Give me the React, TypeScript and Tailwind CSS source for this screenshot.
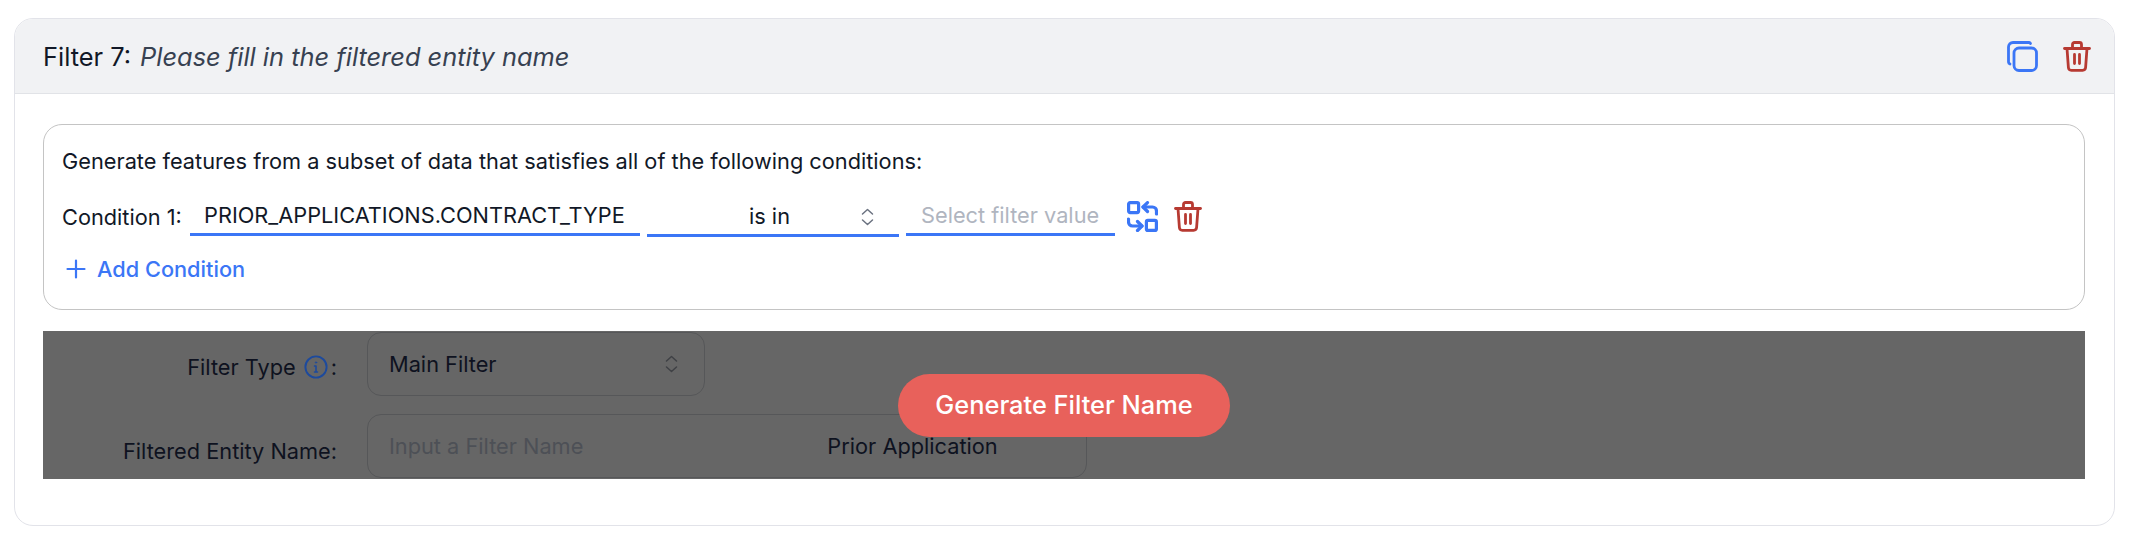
import React from "react";

function Trash({ className }: { className: string }) {
  return (
    <svg viewBox="0 0 28 31" fill="none" stroke="#b73a32" strokeWidth="2.8" strokeLinecap="round" strokeLinejoin="round" className={className}>
      <path d="M1.5 7.5h25" />
      <path d="M4 7.5l1.4 19a3 3 0 0 0 3 2.8h11.2a3 3 0 0 0 3-2.8l1.4-19" />
      <path d="M9.5 7.5V3.500a2 2 0 0 1 2-2h5a2 2 0 0 1 2 2v4" />
      <path d="M11.500 13.500v9M16.500 13.500v9" />
    </svg>
  );
}

function Chevrons({ className, color }: { className: string; color: string }) {
  return (
    <svg viewBox="0 0 13 18" fill="none" stroke={color} strokeWidth="1.5" strokeLinecap="round" strokeLinejoin="round" className={className}>
      <path d="M1.5 6l5-4.500 5 4.500" />
      <path d="M1.5 12l5 4.500 5-4.500" />
    </svg>
  );
}

export default function App() {
  return (
    <div className="h-[542px] w-[2132px] bg-white pt-[18px] pl-[14px] pr-[17px] font-['Inter',sans-serif] text-[21.76px] text-[#111827]">
      <div className="h-[508px] rounded-[19px] border border-[#e2e3e9] bg-white">
        <div className="flex h-[75px] items-center justify-between rounded-t-[18px] border-b border-[#e1e3e7] bg-[#f1f2f4] pl-[28px] pr-[23px]">
          <div className="mt-[2px] flex items-baseline gap-[9px] text-[25.4px] whitespace-nowrap">
            <span>Filter 7:</span>
            <span className="italic text-[#374151]">Please fill in the filtered entity name</span>
          </div>
          <div className="flex items-center gap-[25px]">
            <svg viewBox="0 0 31 31" fill="none" stroke="#3b76f6" strokeWidth="2.8" strokeLinecap="round" strokeLinejoin="round" className="h-[31px] w-[31px]">
              <rect x="7" y="7" width="22.5" height="22.5" rx="5" />
              <path d="M23.5 2.500a2 2 0 0 0-1.500-1H6a4.500 4.500 0 0 0-4.500 4.500v15a2.500 2.500 0 0 0 1.500 2" />
            </svg>
            <Trash className="h-[31px] w-[28px]" />
          </div>
        </div>
        <div className="pl-[28px] pr-[29px] pt-[30px]">
          <div className="h-[186px] rounded-[19px] border border-[#c4c4c4] pl-[18px] pt-[21px]">
            <div className="h-[30px] leading-[30px] whitespace-nowrap">Generate features from a subset of data that satisfies all of the following conditions:</div>
            <div className="mt-[28px] flex h-[37px] items-start">
              <span className="mt-[-2px] w-[128px] leading-[30px] whitespace-nowrap">Condition 1:</span>
              <div className="h-[32px] w-[450px] border-b-[3px] border-[#3b76f6] pl-[14px] leading-[22px] whitespace-nowrap">PRIOR_APPLICATIONS.CONTRACT_TYPE</div>
              <div className="ml-[7px] mt-[1px] flex h-[32px] w-[252px] items-start justify-between border-b-[3px] border-[#3b76f6] pl-[102px] pr-[25px] leading-[22px]">
                <span>is in</span>
                <Chevrons className="mt-[3px] h-[18px] w-[13px]" color="#6b7280" />
              </div>
              <div className="ml-[7px] h-[32px] w-[209px] border-b-[3px] border-[#3b76f6] pl-[15px] leading-[22px] whitespace-nowrap text-[#b0b5bf]">Select filter value</div>
              <svg viewBox="0 0 31 31" fill="none" stroke="#3b76f6" strokeWidth="3.2" strokeLinecap="round" strokeLinejoin="round" className="ml-[12px] mt-[-3px] h-[31px] w-[31px]">
                <rect x="1.600" y="1.600" width="10" height="10" rx="1.500" />
                <rect x="19.400" y="19.400" width="10" height="10" rx="1.500" />
                <path d="M20.500 1.600L16 6l4.500 4.500" />
                <path d="M16 6h9.500a4 4 0 0 1 4 4v3" />
                <path d="M10.500 20.500L15 25l-4.500 4.500" />
                <path d="M15 25H5.500a4 4 0 0 1-4-4v-3" />
              </svg>
              <Trash className="ml-[16px] mt-[-3px] h-[31px] w-[28px]" />
            </div>
            <div className="mt-[13px] flex h-[30px] items-center font-medium text-[#3b76f6]">
              <svg viewBox="0 0 20 20" fill="none" stroke="#3b76f6" strokeWidth="2.2" strokeLinecap="round" className="ml-[4px] h-[20px] w-[20px]">
                <path d="M10 1.500v17M1.500 10h17" />
              </svg>
              <span className="ml-[11px] whitespace-nowrap">Add Condition</span>
            </div>
          </div>
          <div className="relative mt-[21px] h-[148px] w-[2042px] overflow-hidden bg-[#666666] text-[#0e1220]">
            <div className="mt-[1px] flex h-[64px] items-center">
              <div className="flex w-[324px] items-center justify-end pt-[6px] pr-[30px] whitespace-nowrap">
                <span>Filter Type</span>
                <svg viewBox="0 0 24 24" fill="none" stroke="#1d4a9d" strokeWidth="1.900" strokeLinecap="round" className="ml-[8px] h-[24px] w-[24px]">
                  <circle cx="12" cy="12" r="10.600" />
                  <path d="M12 11v6M10.500 11H12M10.500 17h3" strokeWidth="1.600" />
                  <circle cx="12" cy="7.500" r="0.700" strokeWidth="1" />
                </svg>
                <span className="ml-[3px]">:</span>
              </div>
              <div className="flex h-[64px] w-[338px] items-center justify-between rounded-[14px] border border-[#565759] pl-[21px] pr-[26px]">
                <span>Main Filter</span>
                <Chevrons className="h-[18px] w-[13px]" color="#3f4145" />
              </div>
            </div>
            <div className="mt-[18px] flex h-[64px] items-center">
              <div className="w-[324px] pt-[10px] pr-[30px] text-right whitespace-nowrap">Filtered Entity Name:</div>
              <div className="flex h-[64px] w-[720px] items-center rounded-[14px] border border-[#565759] pl-[21px]">
                <span className="whitespace-nowrap text-[#4d5056]">Input a Filter Name</span>
                <span className="ml-[244px] whitespace-nowrap">Prior Application</span>
              </div>
            </div>
            <button className="absolute left-[855px] top-[43px] h-[63px] w-[332px] rounded-full bg-[#e8615b] text-[25.4px] font-medium text-white">Generate Filter Name</button>
          </div>
        </div>
      </div>
    </div>
  );
}
